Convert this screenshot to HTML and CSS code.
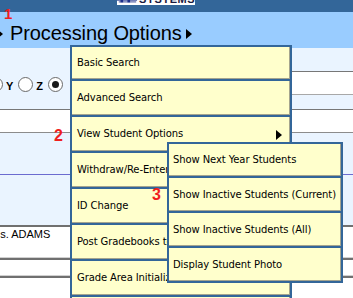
FILE: index.html
```html
<!DOCTYPE html>
<html lang="en">
<head>
    <meta charset="UTF-8">
    <title>Processing Options</title>
    <link rel="stylesheet" href="styles.css">
</head>
<body>
    <div class="page">
        <div class="topbar">
            <div class="logo">
                <svg width="24" height="14" viewBox="0 0 24 14">
                    <rect x="1" y="7" width="22" height="1" fill="#1c2f8a"/>
                    <rect x="0" y="9" width="23" height="1" fill="#1c2f8a"/>
                    <rect x="2" y="11" width="20" height="1" fill="#1c2f8a"/>
                    <rect x="4" y="8" width="3" height="4" fill="#1c2f8a"/>
                    <rect x="12" y="8" width="3" height="4" fill="#1c2f8a"/>
                </svg>
                <span>SYSTEMS</span>
            </div>
        </div>

        <div class="header">
            <span class="tri tri-left"></span>
            <h1>Processing Options</h1>
            <span class="tri"></span>
        </div>

        <div class="content">
            <div class="gap gap-top"></div>
            <div class="radio-row">
                <div class="radios">
                    <span class="radio radio-cut"></span>
                    <label>Y</label>
                    <span class="radio"></span>
                    <label>Z</label>
                    <span class="radio checked"></span>
                </div>
                <div class="field"></div>
            </div>
            <div class="gap gap-mid"></div>
            <div class="band"></div>
            <div class="gap gap-low"></div>
            <div class="divider"></div>
            <div class="gap gap-bottom"></div>
            <div class="grid-row teacher"><span>Ms. ADAMS</span></div>
            <div class="grid-row short"></div>
            <div class="grid-row"></div>
        </div>

        <ul class="menu main-menu">
            <li class="item">Basic Search</li>
            <li class="item">Advanced Search</li>
            <li class="item has-sub">View Student Options <span class="arrow"></span></li>
            <li class="item">Withdraw/Re-Enter Student</li>
            <li class="item">ID Change</li>
            <li class="item">Post Gradebooks to Report Cards</li>
            <li class="item">Grade Area Initialization</li>
            <li class="item"></li>
        </ul>

        <ul class="menu sub-menu">
            <li class="item">Show Next Year Students</li>
            <li class="item">Show Inactive Students (Current)</li>
            <li class="item">Show Inactive Students (All)</li>
            <li class="item">Display Student Photo</li>
        </ul>

        <span class="marker marker-1">1</span>
        <span class="marker marker-2">2</span>
        <span class="marker marker-3">3</span>
    </div>
</body>
</html>
```

FILE: styles.css
```css
html, body {
    margin: 0;
    padding: 0;
    overflow: hidden;
}

body {
    font-family: 'Liberation Sans', Arial, sans-serif;
    background: #ffffff;
    color: #000000;
}

.page {
    position: relative;
    height: 298px;
    overflow: hidden;
}

.topbar {
    height: 12px;
    background: #336699;
    padding-left: 117px;
    overflow: hidden;
}

.logo {
    width: 78px;
    height: 14px;
    margin-top: -9px;
    background: #ffffff;
    display: flex;
    align-items: flex-end;
    gap: 1px;
}

.logo svg {
    display: block;
}

.logo span {
    font-size: 11px;
    font-weight: bold;
    color: #1a1a40;
    letter-spacing: 0.5px;
    line-height: 11px;
}

.header {
    height: 36px;
    background: #99ccff;
    display: flex;
    align-items: center;
    box-sizing: border-box;
    padding-top: 6px;
}

.header h1 {
    margin: 0 0 0 7px;
    font-size: 20px;
    font-weight: normal;
    letter-spacing: -0.1px;
    line-height: 23px;
}

.tri {
    width: 0;
    height: 0;
    border-left: 6px solid #000000;
    border-top: 5px solid transparent;
    border-bottom: 5px solid transparent;
    margin-left: 4px;
    margin-top: 1px;
}

.tri.tri-left {
    margin-left: -3px;
}

.content {
    background: #eaf4ff;
}

.gap-top { height: 23px; }
.gap-mid { height: 14px; }
.gap-low { height: 41px; }
.gap-bottom { height: 50px; }

.radio-row {
    height: 24px;
    display: flex;
    align-items: center;
}

.radios {
    display: flex;
    align-items: center;
    width: 80px;
    padding-top: 2px;
}

.radios label {
    font-size: 11px;
    font-weight: bold;
    margin: 3px 5px 0 3px;
}

.radio {
    width: 13px;
    height: 13px;
    border: 1px solid #6a6a6a;
    border-radius: 50%;
    background: #ffffff;
    box-sizing: content-box;
    position: relative;
    flex: none;
}

.radio.radio-cut {
    margin-left: -12px;
}

.radio.checked::after {
    content: "";
    position: absolute;
    left: 3px;
    top: 3px;
    width: 7px;
    height: 7px;
    border-radius: 50%;
    background: #1a1a1a;
}

.field {
    flex: 1;
    height: 22px;
    margin-left: 20px;
    background: #ffffff;
    border-top: 1px solid #777777;
    border-bottom: 1px solid #a8a8a8;
}

.band {
    height: 22px;
    background: #ffffff;
    border-top: 1px solid #777777;
    border-bottom: 1px solid #8c8c8c;
}

.divider {
    height: 1px;
    background: #6b6bd0;
}

.grid-row {
    background: #ffffff;
    border-top: 2px solid #707070;
    box-shadow: 0 -1px 0 #d0d0d0;
    height: 40px;
}

.grid-row.teacher {
    box-shadow: none;
    font-size: 11px;
    line-height: 13px;
    padding-top: 1px;
    height: 30px;
}

.grid-row.teacher span {
    margin-left: -9px;
}

.grid-row.short {
    height: 16px;
}

.menu {
    position: absolute;
    margin: 0;
    padding: 2px;
    list-style: none;
    background: #336699;
    display: flex;
    flex-direction: column;
    gap: 2px;
    box-sizing: border-box;
    font-family: 'DejaVu Sans', Verdana, sans-serif;
    font-size: 10px;
    letter-spacing: -0.1px;
}

.main-menu {
    left: 70px;
    top: 45px;
    width: 222px;
}

.sub-menu {
    left: 167px;
    top: 142px;
    width: 176px;
}

.item {
    height: 33px;
    flex: none;
    background: #ffffcc;
    border-right: 1px solid #a4a48e;
    border-bottom: 1px solid #a4a48e;
    display: flex;
    align-items: center;
    white-space: nowrap;
    overflow: hidden;
    padding-left: 5px;
}

.main-menu .item:first-child {
    height: 31px;
}

.sub-menu .item {
    height: 32px;
    padding-left: 4px;
}

.sub-menu .item:first-child {
    height: 31px;
}

.has-sub {
    justify-content: space-between;
    padding-right: 7px;
}

.arrow {
    width: 0;
    height: 0;
    border-left: 6px solid #000000;
    border-top: 5px solid transparent;
    border-bottom: 5px solid transparent;
    margin-top: 2px;
}

.marker {
    position: absolute;
    color: #f01e1e;
    font-weight: bold;
    font-size: 15px;
    line-height: 15px;
}

.marker-1 {
    left: 4px;
    top: 6px;
}

.marker-2 {
    left: 54px;
    top: 128px;
    font-size: 16px;
}

.marker-3 {
    left: 152px;
    top: 187px;
    font-size: 16px;
}
```
